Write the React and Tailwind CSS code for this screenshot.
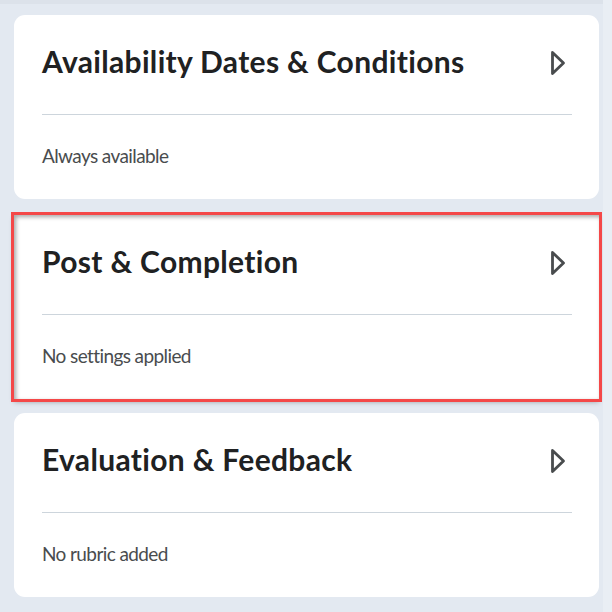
import React from "react";

function Chevron() {
  return (
    <svg width="16" height="26" viewBox="0 0 16 26" className="shrink-0">
      <path d="M2.5 2.5 L13.5 13 L2.5 23.5 Z" fill="none" stroke="#494c4e" strokeWidth="2.8" strokeLinejoin="round" />
    </svg>
  );
}

function Card({ title, sub, highlight, className }) {
  return (
    <div
      className={
        "bg-white h-[184px] flex flex-col " +
        (highlight
          ? "outline-[3px] outline-solid outline-[#f44848] outline-offset-[0px] shadow-[inset_2px_2px_4px_rgba(0,0,0,0.35),0_3px_5px_rgba(0,0,0,0.3)] "
          : "rounded-[11px] ") +
        className
      }
    >
      <div className="pl-[28px] pr-[27px]">
        <div className="flex items-center justify-between pt-[29px] pb-[35px]">
          <div className="text-[30px] leading-[35px] font-bold tracking-[0.33px] text-[#202122]">{title}</div>
          <div className="mr-[6px] mt-[2px]">
            <Chevron />
          </div>
        </div>
        <div className="h-px bg-[#cdd5dc]" />
        <div className="pt-[29px] text-[19px] leading-[24px] tracking-[-0.6px] text-[#494c4e]">{sub}</div>
      </div>
    </div>
  );
}

export default function App() {
  return (
    <div className="w-[612px] h-[612px] flex bg-[#e3e9f1] overflow-hidden" style={{ fontFamily: "Lato, 'Noto Sans', sans-serif" }}>
      <div className="w-[603px] flex flex-col">
        <div className="h-[4px] bg-[#dce2ea]" />
        <div className="pl-[14px] pr-[4px] pt-[11px] flex flex-col">
          <Card title="Availability Dates & Conditions" sub="Always available" className="" />
          <Card title="Post & Completion" sub="No settings applied" highlight className="mt-[16px]" />
          <Card title="Evaluation & Feedback" sub="No rubric added" className="mt-[14px]" />
        </div>
      </div>
      <div className="w-[9px] bg-[#e9eef4]" />
    </div>
  );
}
